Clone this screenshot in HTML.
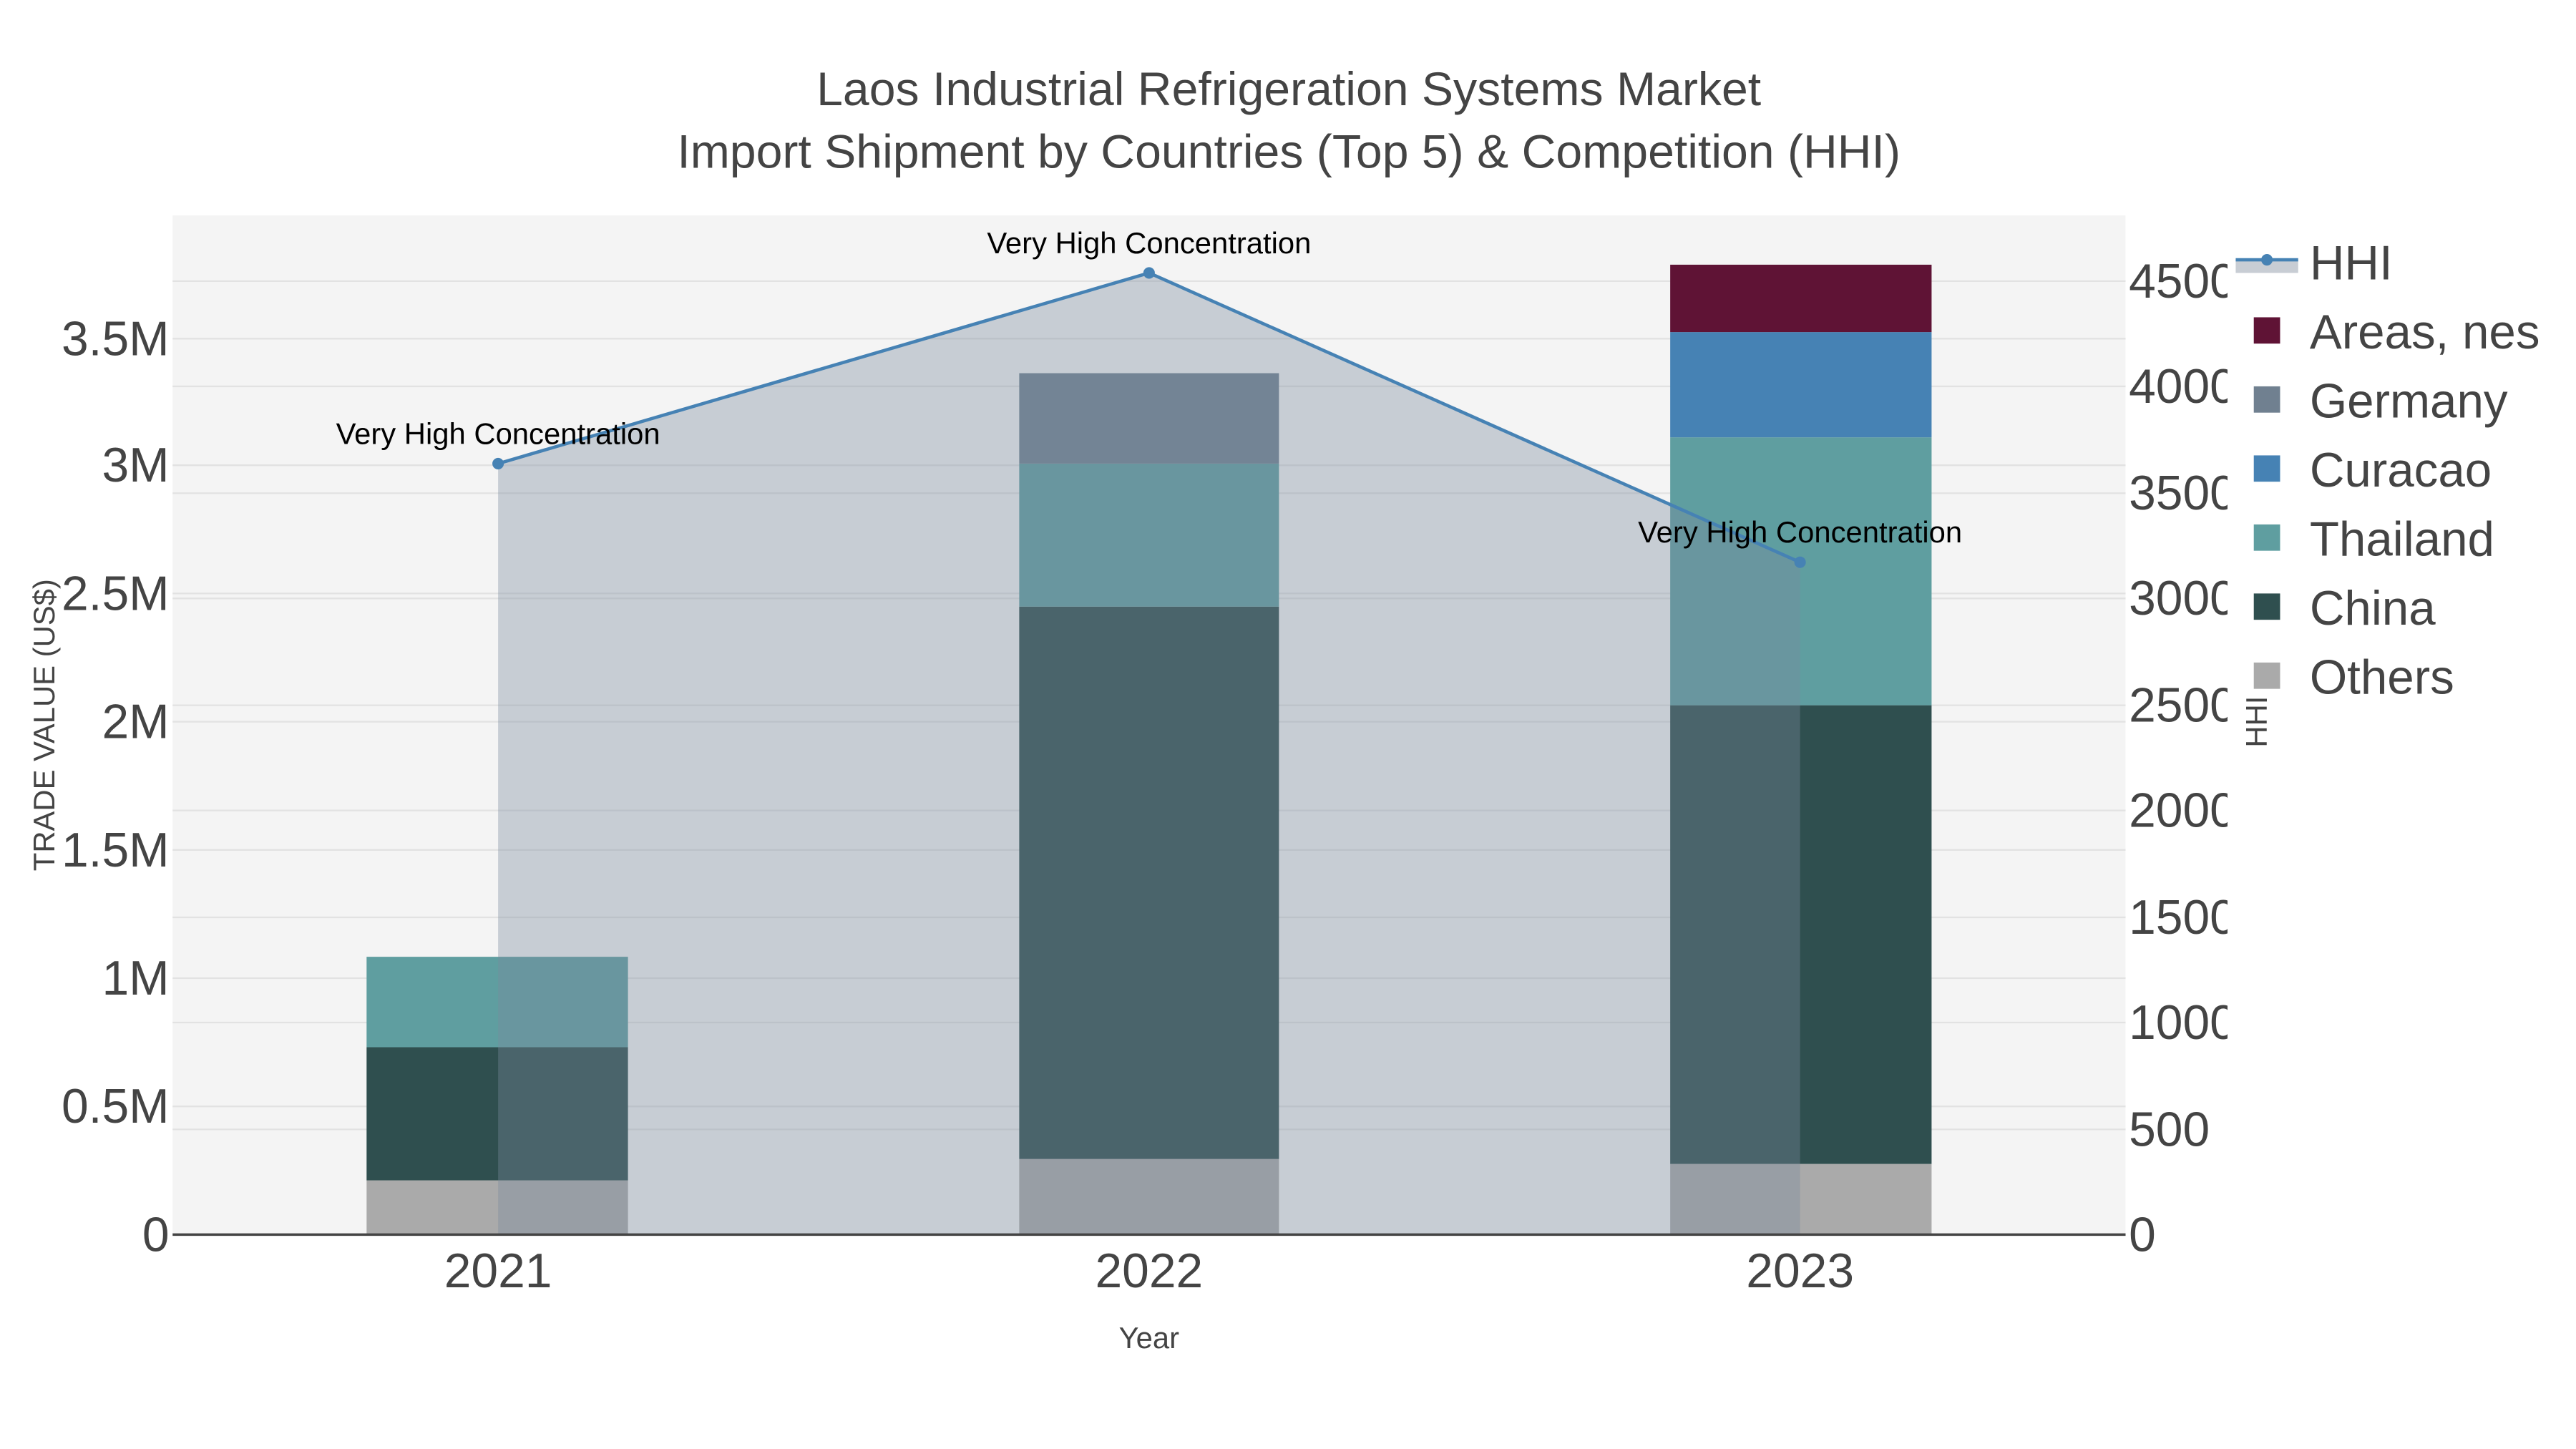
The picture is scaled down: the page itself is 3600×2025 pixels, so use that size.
<!DOCTYPE html>
<html><head><style>html,body{margin:0;padding:0;background:#fff}svg{display:block}</style></head><body>
<svg width="3600" height="2025" viewBox="0 0 1567 881.4" xmlns="http://www.w3.org/2000/svg" font-family="Liberation Sans, sans-serif">
<rect width="1600" height="900" fill="#fff"/>
<rect x="105" y="131" width="1188" height="620" fill="#f4f4f4"/>
<g stroke="#e2e2e2" stroke-width="1">
<line x1="105" x2="1293" y1="673" y2="673"/><line x1="105" x2="1293" y1="595" y2="595"/><line x1="105" x2="1293" y1="517" y2="517"/><line x1="105" x2="1293" y1="439" y2="439"/><line x1="105" x2="1293" y1="361" y2="361"/><line x1="105" x2="1293" y1="283" y2="283"/><line x1="105" x2="1293" y1="206" y2="206"/>
<line x1="105" x2="1293" y1="687" y2="687"/><line x1="105" x2="1293" y1="622" y2="622"/><line x1="105" x2="1293" y1="558" y2="558"/><line x1="105" x2="1293" y1="493" y2="493"/><line x1="105" x2="1293" y1="429" y2="429"/><line x1="105" x2="1293" y1="364" y2="364"/><line x1="105" x2="1293" y1="300" y2="300"/><line x1="105" x2="1293" y1="235" y2="235"/><line x1="105" x2="1293" y1="171" y2="171"/>
</g>
<rect x="223" y="718" width="159" height="33" fill="#aaaaaa"/>
<rect x="223" y="637" width="159" height="81" fill="#2f4f4f"/>
<rect x="223" y="582" width="159" height="55" fill="#5f9ea0"/>
<rect x="620" y="705" width="158" height="46" fill="#aaaaaa"/>
<rect x="620" y="369" width="158" height="336" fill="#2f4f4f"/>
<rect x="620" y="282" width="158" height="87" fill="#5f9ea0"/>
<rect x="620" y="227" width="158" height="55" fill="#708090"/>
<rect x="1016" y="708" width="159" height="43" fill="#aaaaaa"/>
<rect x="1016" y="429" width="159" height="279" fill="#2f4f4f"/>
<rect x="1016" y="266" width="159" height="163" fill="#5f9ea0"/>
<rect x="1016" y="202" width="159" height="64" fill="#4682b4"/>
<rect x="1016" y="161" width="159" height="41" fill="#5f1335"/>
<polygon points="303,282 699,166 1095,342 1095,751 303,751" fill="rgb(123,137,156)" fill-opacity="0.37"/>
<polyline points="303,282 699,166 1095,342" fill="none" stroke="#4682b4" stroke-width="2"/>
<circle cx="303" cy="282" r="3.5" fill="#4682b4"/><circle cx="699" cy="166" r="3.5" fill="#4682b4"/><circle cx="1095" cy="342" r="3.5" fill="#4682b4"/>
<line x1="105" x2="1293" y1="751" y2="751" stroke="#444" stroke-width="1.5"/>
<g font-size="18.2" fill="#000" text-anchor="middle">
<text x="303" y="270">Very High Concentration</text>
<text x="699" y="154">Very High Concentration</text>
<text x="1095" y="330">Very High Concentration</text>
</g>
<g font-size="28.8" fill="#444" text-anchor="middle">
<text x="784" y="64">Laos Industrial Refrigeration Systems Market</text>
<text x="784" y="102">Import Shipment by Countries (Top 5) &amp; Competition (HHI)</text>
</g>
<g font-size="29.5" fill="#444" text-anchor="middle">
<text x="303" y="783">2021</text><text x="699" y="783">2022</text><text x="1095" y="783">2023</text>
</g>
<g font-size="29.5" fill="#444" text-anchor="end">
<text x="103" y="761">0</text><text x="103" y="683">0.5M</text><text x="103" y="605">1M</text><text x="103" y="527">1.5M</text><text x="103" y="449">2M</text><text x="103" y="371">2.5M</text><text x="103" y="293">3M</text><text x="103" y="216">3.5M</text>
</g>
<svg x="1293" y="130" width="62" height="640" overflow="hidden">
<g font-size="29.5" fill="#444">
<text x="2" y="631">0</text><text x="2" y="567">500</text><text x="2" y="502">1000</text><text x="2" y="438">1500</text><text x="2" y="373">2000</text><text x="2" y="309">2500</text><text x="2" y="244">3000</text><text x="2" y="180">3500</text><text x="2" y="115">4000</text><text x="2" y="51">4500</text>
</g></svg>
<text x="699" y="820" font-size="18.2" fill="#444" text-anchor="middle">Year</text>
<text transform="translate(33,441) rotate(-90)" font-size="18.2" fill="#444" text-anchor="middle">TRADE VALUE (US$)</text>
<text transform="translate(1379,439) rotate(-90)" font-size="18.2" fill="#444" text-anchor="middle">HHI</text>
<rect x="1360" y="158" width="38" height="8" fill="#c8cdd4"/>
<line x1="1360" x2="1398" y1="158" y2="158" stroke="#4682b4" stroke-width="2"/><circle cx="1379" cy="158" r="3.5" fill="#4682b4"/>
<rect x="1371" y="193" width="16" height="16" fill="#5f1335"/>
<rect x="1371" y="235" width="16" height="16" fill="#708090"/>
<rect x="1371" y="277" width="16" height="16" fill="#4682b4"/>
<rect x="1371" y="319" width="16" height="16" fill="#5f9ea0"/>
<rect x="1371" y="361" width="16" height="16" fill="#2f4f4f"/>
<rect x="1371" y="403" width="16" height="16" fill="#aaaaaa"/>
<g font-size="29.3" fill="#444">
<text x="1405" y="170">HHI</text><text x="1405" y="212">Areas, nes</text><text x="1405" y="254">Germany</text><text x="1405" y="296">Curacao</text><text x="1405" y="338">Thailand</text><text x="1405" y="380">China</text><text x="1405" y="422">Others</text>
</g>
</svg>
</body></html>
